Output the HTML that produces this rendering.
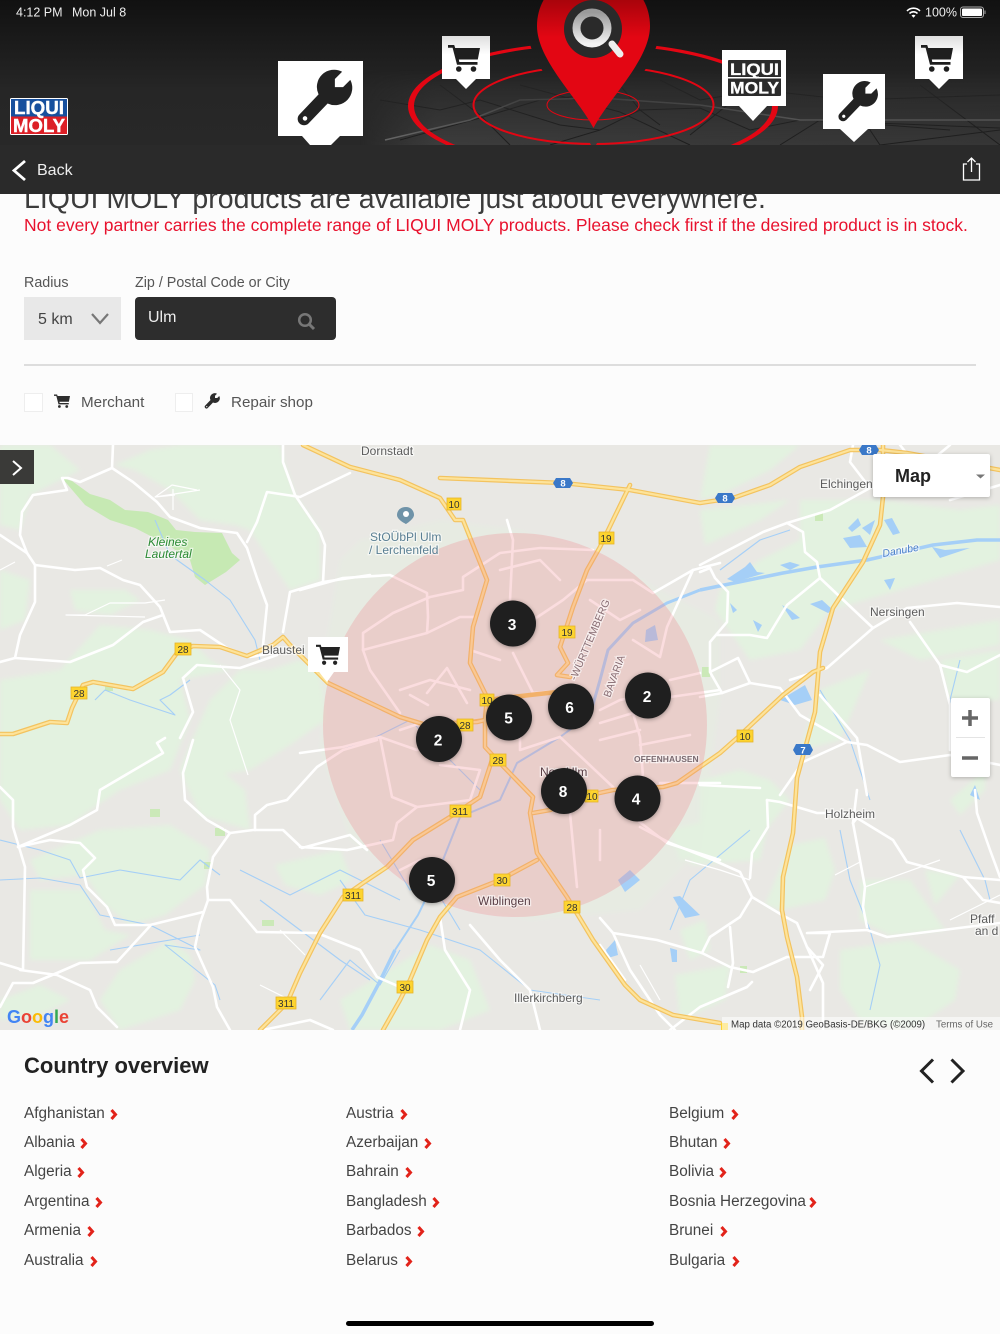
<!DOCTYPE html>
<html lang="en"><head><meta charset="utf-8"><title>LIQUI MOLY dealer search</title>
<style>
*{box-sizing:border-box}
html,body{margin:0;padding:0;width:1000px;height:1334px;overflow:hidden;background:#fcfcfc;font-family:"Liberation Sans",sans-serif}
#p{position:relative;width:1000px;height:1334px;overflow:hidden}
.a{position:absolute;white-space:nowrap}
svg{position:absolute;overflow:hidden}
.c{font-size:15.300px;line-height:20px;color:#444}
.c svg{position:absolute;top:4.500px}
</style></head><body><div id="p">
<svg width="0" height="0" style="left:0;top:0"><defs>
<symbol id="cart" viewBox="0 0 32 28"><path d="M0 1h6.200l1 3H32l-2.200 11.500H10.800l.5 2.500H29.500v2.800H9L4.600 3.800H0z"/><circle cx="10.800" cy="25" r="2.800"/><circle cx="25.500" cy="25" r="2.800"/></symbol>
<symbol id="wrench" viewBox="0 0 64 64"><path fill-rule="evenodd" d="M52 3L44 11V20H53L61 12A19 19 0 0 1 36 38L15 60A7 7 0 0 1 5 50L26 28A19 19 0 0 1 52 3ZM11 52a2.500 2.500 0 1 0 .1 0Z"/></symbol>
<symbol id="rc" viewBox="0 0 8 11"><path d="M1.500 1l4 4.500-4 4.500" fill="none" stroke="#e2231a" stroke-width="3"/></symbol>
<linearGradient id="tag" x1="0" y1="0" x2="0" y2="1"><stop offset="0" stop-color="#dedede"/><stop offset=".35" stop-color="#fff"/></linearGradient>
<linearGradient id="pin" x1="0" y1="0" x2="0" y2="1"><stop offset="0" stop-color="#7d0205"/><stop offset=".42" stop-color="#e30613"/><stop offset="1" stop-color="#e30613"/></linearGradient>
<linearGradient id="mag" x1="0" y1="0" x2="0" y2="1"><stop offset="0" stop-color="#9a9a9a"/><stop offset="1" stop-color="#f2f2f2"/></linearGradient>
<linearGradient id="hd" x1="0" y1="0" x2="0" y2="1"><stop offset="0" stop-color="#111"/><stop offset=".62" stop-color="#262626"/><stop offset="1" stop-color="#282828"/></linearGradient>
<linearGradient id="tex" x1="0" y1="0" x2="1" y2="0"><stop offset="0" stop-color="#3c3c3c" stop-opacity="0"/><stop offset=".12" stop-color="#3c3c3c"/><stop offset="1" stop-color="#363636"/></linearGradient>
<linearGradient id="texv" x1="0" y1="0" x2="0" y2="1"><stop offset="0" stop-color="#fff" stop-opacity="0"/><stop offset="1" stop-color="#fff"/></linearGradient>
<mask id="tm"><rect x="340" y="70" width="660" height="75" fill="url(#texv)"/></mask>
<mask id="rm" maskUnits="userSpaceOnUse" x="0" y="0" width="1000" height="194"><rect width="1000" height="194" fill="#fff"/><path d="M593.500 128C578 98 537 60 537 26C537-5 562-28 593.500-28C625-28 650-5 650 26C650 60 609 98 593.500 128Z" fill="#000" stroke="#000" stroke-width="20"/></mask>
<filter id="bl" x="-5%" y="-5%" width="110%" height="110%"><feGaussianBlur stdDeviation="2"/></filter>
</defs></svg>

<!-- content -->
<div class="a" style="left:24px;top:179px;font-size:28.500px;line-height:40px;color:#3c3c3c">LIQUI MOLY products are available just about everywhere.</div>
<div class="a" style="left:24px;top:215px;font-size:17.500px;line-height:20px;color:#e8112d">Not every partner carries the complete range of LIQUI MOLY products. Please check first if the desired product is in stock.</div>
<div class="a" style="left:24px;top:274px;font-size:14.300px;line-height:18px;color:#555">Radius</div>
<div class="a" style="left:135px;top:274px;font-size:14.300px;line-height:18px;color:#555">Zip / Postal Code or City</div>
<div class="a" style="left:24px;top:297px;width:97px;height:43px;background:#e8e8e8"></div>
<div class="a" style="left:38px;top:310px;font-size:16px;line-height:20px;color:#444">5 km</div>
<svg style="left:90px;top:312px" width="20" height="14"><path d="M2 2l8 9 8-9" fill="none" stroke="#777" stroke-width="2.200"/></svg>
<div class="a" style="left:135px;top:297px;width:201px;height:43px;background:#2d2d2d;border-radius:4px"></div>
<div class="a" style="left:148px;top:308px;font-size:16px;line-height:20px;color:#eee">Ulm</div>
<svg style="left:296px;top:311px" width="20" height="20"><circle cx="9" cy="9" r="5.800" fill="none" stroke="#777" stroke-width="2.500"/><path d="M13 13l5 5" stroke="#777" stroke-width="3"/></svg>
<div class="a" style="left:24px;top:364px;width:952px;height:1.500px;background:#ddd"></div>
<div class="a" style="left:24px;top:393px;width:18.500px;height:18.500px;background:#fff;border:1.500px solid #eee"></div>
<div class="a" style="left:174.500px;top:393px;width:18.500px;height:18.500px;background:#fff;border:1.500px solid #eee"></div>
<svg style="left:54px;top:394px;fill:#2d2d2d" width="16" height="14"><use href="#cart"/></svg>
<svg style="left:204px;top:393px;fill:#2d2d2d" width="16" height="16"><use href="#wrench"/></svg>
<div class="a" style="left:81px;top:393px;font-size:15.200px;line-height:20px;color:#555">Merchant</div>
<div class="a" style="left:231px;top:393px;font-size:15.200px;line-height:20px;color:#555">Repair shop</div>

<!-- map -->
<svg style="left:0;top:445px" width="1000" height="585" viewBox="0 445 1000 585" font-family="'Liberation Sans',sans-serif">
<rect x="0" y="445" width="1000" height="585" fill="#e9e8e4"/>
<g fill="#e3f2e0" filter="url(#bl)">
<path d="M0 445H50L80 470 60 480 30 495 20 530 0 525Z"/>
<path d="M180 445H280L285 465 295 495 320 530 320 580 290 590 270 560 250 530 235 525 200 520 170 490 135 470 115 465 150 450Z"/>
<path d="M0 570L30 580 25 620 0 630Z"/>
<path d="M70 590H125L140 600 110 615 75 610Z"/>
<path d="M0 680L60 670 100 625 150 630 190 640 210 660 230 670 180 680 190 720 170 770 120 790 90 810 70 825 20 830 0 800Z"/>
<path d="M240 670H270L300 660 320 670 325 720 290 745 250 770 215 775 190 745 210 700Z"/>
<path d="M190 745L245 790 250 830 200 815 180 770Z"/>
<path d="M30 860L100 830 170 825 210 850 205 885 165 915 130 925 105 905 85 875 40 880Z"/>
<path d="M30 890H85L105 930 130 935 90 960 30 960Z"/>
<path d="M120 970L170 940 190 955 195 980 180 1010 120 1030 100 1000Z"/>
<path d="M275 865L340 850 352 880 320 895 285 885Z"/>
<path d="M0 1000L40 985 70 1000 40 1015 0 1020Z"/>
<path d="M710 445H800L770 470 720 495 700 500Z"/>
<path d="M800 500L880 500 960 510 1000 505 1000 560 900 590 830 610 800 650 750 660 715 610 720 590 760 560 800 540Z"/>
<path d="M700 510L790 500 760 520 705 545Z"/>
<path d="M820 690L870 670 840 740 800 750Z"/>
<path d="M700 780L740 770 770 780 790 800 750 850 700 850Z"/>
<path d="M700 825L740 810 770 815 760 860 690 865Z"/>
<path d="M790 845L825 838 835 870 825 900 780 910 765 905Z"/>
<path d="M670 830L730 815 740 850 680 860Z"/>
<path d="M680 930L705 920 710 950 690 960Z"/>
<path d="M675 975L730 965 725 1000 680 1020Z"/>
<path d="M860 880L910 880 945 930 890 935 860 920Z"/>
<path d="M925 870L960 875 935 905Z"/>
<path d="M840 950L910 940 960 970 955 1000 910 1030 860 1020 840 990Z"/>
<path d="M950 800L985 770 985 790 960 815Z"/>
<path d="M880 640L1000 620V645L920 660Z"/>
<path d="M940 660L1000 650V700L950 700Z"/>
<path d="M340 1000L430 945 470 960 490 1010 440 1030H350Z"/>
<path d="M340 560L360 540 440 520 520 530 600 555 660 590 720 620V700L700 850 640 910 530 920 440 900 350 840 320 750 325 650Z" opacity=".35"/>
</g>
<path fill="#c6e9b3" d="M62 478L72 481 90 494 110 500 125 510 148 512 168 520 176 530 195 532 222 533 232 553 240 560 226 572 205 585 195 577 190 560 168 545 135 528 110 520 85 505Z"/>
<g fill="#cbe9b8"><rect x="815" y="513" width="8" height="8"/><rect x="105" y="683" width="8" height="8"/><rect x="150" y="809" width="10" height="8"/><rect x="215" y="828" width="10" height="8"/><rect x="204" y="862" width="7" height="7"/><rect x="262" y="920" width="12" height="6"/><rect x="702" y="667" width="8" height="10"/><rect x="740" y="966" width="7" height="7" /></g>

<!-- water -->
<g fill="none" stroke="#a5cff7" stroke-width="1.100" stroke-linejoin="round">
<path d="M155 520L170 555 205 580 230 600 255 640 260 660"/>
<path d="M190 680L170 695 160 700 175 715 130 700 105 690 95 700"/>
<path d="M0 840L40 850 70 860 80 878 120 870 180 880 200 860 220 875"/>
<path d="M0 880L40 878 80 885 100 915 150 925 200 950 165 945 215 985 220 1000"/>
<path d="M110 950L200 935"/><path d="M240 870L260 880 290 895 340 870 400 900"/>
<path d="M260 900L300 930 340 960 370 980"/>
<path d="M320 1000L350 960 380 985 400 950"/>
<path d="M340 880L365 915 420 930 480 950 530 990 600 1000"/>
<path d="M720 570L760 540 790 530M750 830L690 880 670 930"/>
<path d="M840 830L850 880 870 930 880 965 870 1010"/>
<path d="M960 830L985 880 990 900"/><path d="M325 750L360 745 410 720 450 760 480 790"/>
<path d="M380 840L410 890 430 880 460 930"/>
<path d="M960 660L950 700 965 760M820 690L850 740 870 800"/>
</g>
<g fill="none" stroke="#a5cff7" stroke-linejoin="round">
<path stroke-width="3.500" d="M700 590L783 573 817 567 867 560 933 545 977 540H1000"/>
<path stroke-width="3" d="M700 590L667 603 633 623 608 650 600 680 590 715"/>
<path stroke-width="2" d="M590 715L560 737 517 763 500 800 460 817 435 880 418 915 395 950"/>
<path stroke-width="3.500" d="M395 950L378 985 362 1015 352 1030"/>
</g>
<g fill="#a5cff7">
<path d="M727 579L745 567 750 562 757 572 765 573 735 582Z"/>
<path d="M780 565L790 562 800 565 790 570Z"/>
<path d="M843 538L860 535 867 547 850 548Z"/><path d="M884 520L892 518 900 533 893 535Z"/>
<path d="M862 528L875 520 870 535Z"/><path d="M848 528L858 518 861 525 852 532Z"/>
<path d="M810 604L822 600 833 610 828 613Z"/><path d="M782 605L790 610 800 618 792 620Z"/>
<path d="M730 603L737 610 733 613Z"/><path d="M753 620L762 625 758 632Z"/>
<path d="M780 700L805 685 812 700 795 705Z"/>
<path d="M932 547L945 550 970 548 940 558Z"/><path d="M884 580L895 578 890 590Z"/>
<path d="M673 897L680 896 700 915 685 918Z"/>
<path d="M670 948L677 950 677 962 672 962Z"/>
<path d="M606 950L615 940 618 955 608 958Z"/><path d="M970 795L975 785 980 800Z"/>
<path d="M646 630L655 625 658 640 645 642Z"/><path d="M618 880L630 870 640 880 625 892Z"/>
</g>

<!-- white roads -->
<g fill="none" stroke="#fff" stroke-width="2.600" stroke-linejoin="round" stroke-linecap="round">
<path d="M113 445L112 468 80 482 68 478 62 478 67 490 33 495 22 512 20 535 27 553 35 565 75 570 100 568 123 580 140 585 160 607 170 632 200 630 227 648 250 657 273 653"/>
<path d="M112 468L133 482 157 502 170 517 200 528 237 533 247 548 257 578 267 605 263 645"/>
<path d="M0 535L27 553"/>
<path d="M35 565V602L20 635 15 658 0 662"/>
<path d="M15 658L70 662 113 645 143 622 163 615"/>
<path d="M283 445V462L295 495 320 532 325 545 323 582 290 592 283 632"/>
<path d="M350 473L300 497 267 492 257 522 247 542"/>
<path d="M323 582L350 578 370 575"/>
<path d="M183 678L197 665 240 668 277 655"/>
<path d="M183 678L193 712 180 738"/>
<path d="M193 740L183 773 185 800 207 820 230 833 253 830H283L302 848 350 835 367 850"/>
<path d="M230 833L213 857 207 887 208 900 200 923 195 947 213 987 217 1007 230 1030"/>
<path d="M208 900L230 900 257 932 317 933 360 950 377 977 400 987"/>
<path d="M0 787L13 800V827L25 867 23 970 0 963"/>
<path d="M18 847L70 825 97 810 100 790 163 753 157 743 165 738"/>
<path d="M18 847L50 840 80 843 95 858 83 870 87 887 107 907 115 925H150L203 912"/>
<path d="M150 926L117 962 80 963 57 973 33 983H13L0 1007"/>
<path d="M20 970L57 975 90 990 97 1007 117 1027"/>
<path d="M255 830V815L267 805 287 800 317 767 343 750 377 740"/>
<path d="M263 1030L310 1020 333 1030"/>
<path d="M700 572L710 568 715 578 728 592 727 622 710 642V672L722 693 750 683 738 658 710 672"/>
<path d="M700 565L763 532 787 523 830 510 870 488 850 462 853 445"/>
<path d="M787 523L803 532 805 552 817 562 820 578 787 605 767 638 750 635H717"/>
<path d="M820 578L873 628 907 608 957 603 1000 607"/>
<path d="M873 628L827 668 790 680"/>
<path d="M910 622L940 665 967 672 1000 655"/>
<path d="M940 665L950 705V750"/>
<path d="M750 683L780 688 800 715 847 742 867 745 900 762 950 755 1000 765"/>
<path d="M820 695L857 738 867 795"/>
<path d="M700 785L760 788"/><path d="M722 693L700 697"/>
<path d="M847 742L803 762 780 795"/>
<path d="M900 445L920 470 950 445"/><path d="M950 500L1000 485"/>
<path d="M640 827L670 843 713 860 740 872 752 897 782 915 797 923 807 947 823 983V1030"/>
<path d="M752 897L740 917 710 937 702 953"/>
<path d="M702 953L657 940 613 933 600 918"/>
<path d="M702 953L730 967 753 972 787 957H823L830 933 807 933 867 930 887 937 967 927 1000 923"/>
<path d="M867 927L863 907 865 887 853 823 857 818"/>
<path d="M857 818L893 840 907 862 963 877 983 900 1000 903"/>
<path d="M963 877L1000 880"/>
<path d="M767 800L768 827 752 853 750 878"/>
<path d="M767 800L780 802 817 813H857"/>
<path d="M730 927L733 963 728 987"/>
<path d="M752 982L747 987 700 1007 670 1030"/>
<path d="M975 790L977 813 990 850 1000 877"/>
<path d="M807 947L823 965 810 990"/>
<path d="M613 933L630 970 660 1015 675 1030"/>
<path d="M600 945L625 980"/>
<path d="M857 790L853 823"/>
<path d="M460 1030L470 990 445 950 440 917"/>
<path d="M540 1030L530 990 500 960 470 925"/>
<!-- city -->
<path d="M300 590L343 578 390 575 427 593 428 617 427 633 363 650V633L393 613 430 597 463 590V577L500 553 540 548 593 550"/>
<path d="M363 650L370 670 400 713"/><path d="M427 633L460 617H477"/>
<path d="M507 520L513 540 510 600"/>
<path d="M533 620L563 600 587 580H633L653 593 693 570 720 563"/>
<path d="M427 693L447 668 467 703"/>
<path d="M300 753L343 747 380 737 417 750"/>
<path d="M380 737L392 797 417 807 397 823 393 840 347 850 300 847"/>
<path d="M720 783H660"/>
<path d="M637 820L667 843 720 860"/>
<path d="M670 697L720 690M700 673L670 680"/>
<path d="M600 723L633 713 640 737 643 777"/>
<path d="M560 737L613 787 637 820"/>
<path d="M570 813L577 887"/>
<path d="M633 640L660 657 667 627 693 570"/>
<path d="M513 653L533 693 570 690"/>
<path d="M520 720V750L560 737M600 710L620 700 670 690"/>
<path d="M417 807L470 800M400 870L420 860 440 870"/>
<path d="M500 570L540 560 560 580"/>
<path d="M470 690L430 680 400 690M430 720L400 730"/>
<path d="M428 705L410 695M440 765L480 770 470 800M600 740L640 730M640 745L690 735M600 830L600 860M500 660L470 650M590 600L620 620 640 610"/>
</g>
<g fill="none" stroke="#fff" stroke-width="1.200" stroke-linejoin="round">
<path d="M0 570L15 562M107 566L122 560M175 495L155 497 172 485 197 490M173 489V510M200 490L155 497M165 600L145 603 110 603 85 615 66 615 145 617M305 955L280 930M660 1000L640 965"/>
<path d="M685 860L720 870 750 880M835 875L860 862M865 887L940 860M950 920L1000 895"/>
<path d="M220 665L240 690 230 720 248 775"/>
<path d="M260 985L290 1000"/>
</g>

<!-- yellow roads -->
<g fill="none" stroke-linejoin="round" stroke-linecap="round">
<g stroke="#f3c35f" stroke-width="4.600" id="y">
<path id="r1" d="M0 734H13L50 722 67 723 72 708 83 685 93 682 133 689 163 672 177 653 193 646 220 647 247 656 273 645 283 637 290 645 307 662 328 683 400 717 423 724 477 722 485 720 485 747 497 760 533 797 530 813 537 853 567 897 593 940 625 985 640 1000 673 1015 720 1023"/>
<path id="r2" d="M303 445L350 467 400 480 440 498 455 520 463 520 487 580 473 627 470 663 487 697 485 720"/>
<path id="r3" d="M630 485L613 520 600 547 587 570 573 607 560 647 568 663 557 675 570 677"/>
<path id="r4" d="M440 478L563 483 630 490 700 503 733 498 770 485 800 467 850 450H880L907 453 1000 470"/>
<path id="r5" d="M883 445V497L880 525 863 562 833 608 820 652 815 712 797 778 793 833 783 877 782 910 787 937 797 977 802 1017V1030"/>
<path id="r7" d="M533 813L550 810 590 795 613 790 663 787 677 783 720 753 737 738 783 695 813 672 823 668"/>
<path id="r8" d="M492 760L480 797 450 817 413 840 387 867 363 883 343 897 320 933 300 973 287 1003 260 1030"/>
<path id="r9" d="M537 860L500 880 457 897 440 917 427 940 410 980 400 1000 383 1030"/>
<path d="M487 700L530 695 575 690M450 725L500 718"/>
</g>
<g stroke="#fde39a" stroke-width="2.200">
<use href="#r1"/><use href="#r2"/><use href="#r3"/><use href="#r4"/><use href="#r5"/><use href="#r7"/><use href="#r8"/><use href="#r9"/>
</g>
</g>

<circle cx="515" cy="725" r="192" fill="#f08088" fill-opacity=".27"/>

<!-- labels -->
<g font-size="12" fill="#5c5c5c" stroke="#fff" stroke-width="2.500" stroke-opacity=".6" paint-order="stroke">
<text x="361" y="455">Dornstadt</text>
<text x="820" y="488">Elchingen</text>
<text x="262" y="654">Blaustei</text>
<text x="870" y="616">Nersingen</text>
<text x="825" y="818">Holzheim</text>
<text x="970" y="923">Pfaff</text><text x="975" y="935">an d</text>
<text x="540" y="776" fill="#5a3f46">Neu-Ulm</text>
<text x="478" y="905" fill="#5a3f46">Wiblingen</text>
<text x="514" y="1002">Illerkirchberg</text>
<text x="634" y="762" font-size="8.500" font-weight="bold" fill="#7a6a70">OFFENHAUSEN</text>
<g fill="#5a7f93"><text x="370" y="541">StOÜbPl Ulm</text><text x="369" y="554">/ Lerchenfeld</text></g>
<g fill="#2c8a35" font-style="italic"><text x="148" y="546">Kleines</text><text x="145" y="558">Lautertal</text></g>
<text transform="translate(883 557) rotate(-10)" font-size="10.500" font-style="italic" fill="#4a7fc8">Danube</text>
<text transform="translate(576 681) rotate(-67)" font-size="10.500" fill="#8a6f75">-WÜRTTEMBERG</text>
<text transform="translate(610 698) rotate(-70)" font-size="10.500" fill="#8a6f75">BAVARIA</text>
</g>
<path d="M406 507c-6-0-9 4-9 8 0 5 9 9 9 9s8-5 8-9c0-4-3-8-8-8z" fill="#6f93a8"/><circle cx="406" cy="514" r="3" fill="#fff"/>

<!-- shields -->
<g font-size="10" text-anchor="middle" fill="#333">
<g fill="#fdd42f" stroke="#e8b32a" stroke-width=".8">
<rect x="447" y="498" width="14" height="12"/><rect x="599" y="532" width="15" height="12"/><rect x="559" y="626" width="16" height="12"/><rect x="480" y="694" width="14" height="12"/><rect x="457" y="719" width="16" height="12"/><rect x="490" y="754" width="16" height="12"/><rect x="450" y="805" width="21" height="12"/><rect x="585" y="790" width="13" height="12"/><rect x="737" y="730" width="16" height="12"/><rect x="175" y="643" width="16" height="12"/><rect x="71" y="687" width="16" height="12"/><rect x="343" y="889" width="20" height="12"/><rect x="494" y="874" width="16" height="12"/><rect x="564" y="901" width="16" height="12"/><rect x="276" y="997" width="20" height="12"/><rect x="397" y="981" width="16" height="12"/>
</g>
<text x="454" y="508">10</text><text x="606" y="542">19</text><text x="567" y="636">19</text><text x="487" y="704">10</text><text x="465" y="729">28</text><text x="498" y="764">28</text><text x="460" y="815">311</text><text x="592" y="800">10</text><text x="745" y="740">10</text><text x="183" y="653">28</text><text x="79" y="697">28</text><text x="353" y="899">311</text><text x="502" y="884">30</text><text x="572" y="911">28</text><text x="286" y="1007">311</text><text x="405" y="991">30</text>
<g fill="#3a78c8"><path d="M556 478H570L573 483 570 488H556L553 483Z"/><path d="M718 493H732L735 498 732 503H718L715 498Z"/><path d="M862 445H876L879 450 876 455H862L859 450Z"/><path d="M796 744H810L813 750 810 755H796L793 750Z"/></g>
<g fill="#fff" font-size="9.500" font-weight="bold"><text x="563" y="486.500">8</text><text x="725" y="501.500">8</text><text x="869" y="453.500">8</text><text x="803" y="753.500">7</text></g>
</g>

<!-- clusters -->
<g fill="#1f1f1f" style="filter:drop-shadow(0 1px 2px rgba(0,0,0,.35))">
<circle cx="513" cy="623.500" r="23"/><circle cx="648" cy="695.500" r="23"/><circle cx="571" cy="706.500" r="23"/><circle cx="509" cy="717.500" r="23"/><circle cx="439" cy="739" r="23"/><circle cx="564" cy="791" r="23"/><circle cx="637.500" cy="798.500" r="23"/><circle cx="432" cy="880" r="23"/>
</g>
<g fill="#fff" font-size="15.500" font-weight="bold" text-anchor="middle">
<text x="512" y="630">3</text><text x="647" y="702">2</text><text x="569.500" y="713">6</text><text x="508.500" y="723.500">5</text><text x="438" y="745.500">2</text><text x="563" y="797">8</text><text x="636" y="804.500">4</text><text x="431" y="886">5</text>
</g>

<!-- marker -->
<path d="M308 637H348V672H334L327 682 319 672H308Z" fill="#fff"/>
<svg x="316" y="644" width="24" height="21" style="fill:#222"><use href="#cart"/></svg>

<!-- google -->
<text x="7" y="1023" font-size="18" font-weight="bold"><tspan fill="#4285f4">G</tspan><tspan fill="#ea4335">o</tspan><tspan fill="#fbbc05">o</tspan><tspan fill="#4285f4">g</tspan><tspan fill="#34a853">l</tspan><tspan fill="#ea4335">e</tspan></text>

<!-- attribution -->
<rect x="721" y="1023" width="7" height="7" fill="#fdd42f"/>
<rect x="722" y="1017" width="278" height="13" fill="#fff" fill-opacity=".55"/>
<text x="731" y="1027.500" font-size="9.700" fill="#333">Map data ©2019 GeoBasis-DE/BKG (©2009)</text>
<text x="936" y="1027.500" font-size="9.700" fill="#666">Terms of Use</text>

<!-- controls -->
<g style="filter:drop-shadow(0 1px 2px rgba(0,0,0,.25))">
<rect x="873" y="454" width="117" height="43" rx="2" fill="#fff"/>
<rect x="951" y="698" width="39" height="79" rx="2" fill="#fff"/>
</g>
<text x="895" y="482" font-size="18" font-weight="bold" fill="#222">Map</text>
<path d="M976 474.500h9l-4.500 4z" fill="#777"/>
<rect x="956" y="737" width="29" height="1" fill="#e4e4e4"/>
<path d="M970 710v16M962 718h16" stroke="#666" stroke-width="3.500"/>
<path d="M962 758h16" stroke="#666" stroke-width="3.500"/>
<rect x="0" y="450" width="34" height="34" fill="#3a3a38"/>
<path d="M13 461l8 7-8 7" fill="none" stroke="#fff" stroke-width="2"/>
</svg>

<!-- header -->
<svg style="left:0;top:0" width="1000" height="194" viewBox="0 0 1000 194" font-family="'Liberation Sans',sans-serif">
<rect width="1000" height="145" fill="url(#hd)"/>
<g mask="url(#tm)">
<rect x="360" y="60" width="640" height="85" fill="url(#tex)"/>
<g fill="none" stroke="#1a1a1a" stroke-width="1" stroke-opacity=".85">
<path d="M380 100L440 110 480 100 560 125 600 130 640 110 700 108 750 130 800 120 1000 128"/>
<path d="M440 85L480 115 510 145M520 85L620 112 690 145M600 60L640 110 660 125M690 135L740 95M660 80L700 100 760 90 850 100 1000 95"/>
<path d="M400 140L480 118 540 100 590 95M850 100L880 145M920 85L1000 145M880 145L1000 130M780 145L820 120 950 130M550 145L600 130"/>
</g>
<path d="M385 140L470 120 520 100 600 98 700 105 800 120 1000 120" fill="none" stroke="#6a6a6a" stroke-width="1.500"/>
</g>
<!-- rings -->
<g mask="url(#rm)">
<path fill="#e30613" fill-rule="evenodd" d="M408 106A185 64 0 1 1 778 106A185 64 0 1 1 408 106ZM414 106A179 61 0 1 0 772 106A179 61 0 1 0 414 106Z"/>
<ellipse cx="593.500" cy="105" rx="120" ry="39" fill="none" stroke="#e30613" stroke-width="2"/>
</g>
<ellipse cx="593" cy="105" rx="46" ry="15" fill="none" stroke="#e30613" stroke-width="1"/>
<rect y="145" width="1000" height="49" fill="#2a2a2a"/>
<!-- pin -->
<path d="M593.500 128C578 98 537 60 537 26C537-5 562-28 593.500-28C625-28 650-5 650 26C650 60 609 98 593.500 128Z" fill="url(#pin)"/>
<circle cx="593" cy="29" r="29" fill="#2a2a2a"/>
<path d="M612 44L620 54" stroke="#eee" stroke-width="7" stroke-linecap="round"/>
<circle cx="592" cy="28" r="15.500" fill="none" stroke="url(#mag)" stroke-width="8"/>
<!-- tags -->
<path d="M278 61H363V136H340L331 145H310L302 136H278Z" fill="#fff"/>
<svg x="295" y="69" width="58" height="58" style="fill:#222"><use href="#wrench"/></svg>
<path d="M442 36H490V79H476L466 89 456 79H442Z" fill="url(#tag)"/>
<svg x="448" y="44" width="32" height="28" style="fill:#1e1e1e"><use href="#cart"/></svg>
<path d="M915 36H963V79H949L939 89 929 79H915Z" fill="url(#tag)"/>
<svg x="921" y="44" width="32" height="28" style="fill:#1e1e1e"><use href="#cart"/></svg>
<path d="M722 50H786V106H767L753 121 739 106H722Z" fill="#fff"/>
<rect x="728" y="60" width="53" height="36" rx="1" fill="#2b2b2b"/>
<rect x="728" y="77" width="53" height="1.500" fill="#fff"/>
<text x="754.500" y="75" font-size="17" font-weight="bold" fill="#fff" stroke="#fff" stroke-width=".3" text-anchor="middle" textLength="49" lengthAdjust="spacingAndGlyphs">LIQUI</text>
<text x="754.500" y="93.500" font-size="17" font-weight="bold" fill="#fff" stroke="#fff" stroke-width=".3" text-anchor="middle" textLength="49" lengthAdjust="spacingAndGlyphs">MOLY</text>
<path d="M823 74H885V129H868L854 142 840 129H823Z" fill="#fff"/>
<svg x="836.500" y="80.500" width="42" height="42" style="fill:#222"><use href="#wrench"/></svg>
<!-- logo -->
<rect x="10" y="98" width="58" height="37" rx="1.500" fill="#fff"/>
<rect x="11" y="99" width="56" height="17.500" fill="#17509e"/>
<rect x="11" y="116.500" width="56" height="17.500" fill="#dc1f26"/>
<text x="39" y="114" font-size="18.500" font-weight="bold" fill="#fff" stroke="#fff" stroke-width=".4" text-anchor="middle" textLength="50" lengthAdjust="spacingAndGlyphs">LIQUI</text>
<text x="39" y="132" font-size="18.500" font-weight="bold" fill="#fff" stroke="#fff" stroke-width=".4" text-anchor="middle" textLength="52" lengthAdjust="spacingAndGlyphs">MOLY</text>
<!-- status -->
<text x="16" y="16.500" font-size="12.500" fill="#eee">4:12 PM</text>
<text x="72" y="16.500" font-size="12.500" fill="#eee">Mon Jul 8</text>
<text x="925" y="16.500" font-size="12.500" fill="#eee">100%</text>
<path d="M907 11a9 9 0 0 1 13 0M909.500 13.500a5.500 5.500 0 0 1 8 0" fill="none" stroke="#fff" stroke-width="1.600"/><path d="M911.500 15.500a3 3 0 0 1 4 0l-2 2.200z" fill="#fff"/>
<rect x="960.500" y="7" width="23" height="10.500" rx="2.500" fill="none" stroke="#aaa"/>
<rect x="962" y="8.500" width="20" height="7.500" rx="1.300" fill="#fff"/>
<rect x="984.500" y="10.500" width="1" height="3.500" fill="#aaa"/>
<!-- nav -->
<path d="M25 161L14 170.500 25 180" fill="none" stroke="#fff" stroke-width="2.800"/>
<text x="37" y="175" font-size="16" fill="#eee">Back</text>
<path d="M967 164H963.500V180H979.500V164H976M971.500 172V158.500M967.500 162L971.500 158 975.500 162" fill="none" stroke="#fff" stroke-width="1.300"/>
</svg>

<!-- country -->
<div class="a" style="left:24px;top:1052px;font-size:22px;line-height:28px;font-weight:bold;color:#222">Country overview</div>
<svg style="left:915px;top:1055px" width="55" height="32"><path d="M18 4.500L6.500 16 18 27.500M36.500 4.500L48 16 36.500 27.500" fill="none" stroke="#222" stroke-width="3"/></svg>

<div class="a c" style="left:24px;top:1104px">Afghanistan<svg style="left:86px" width="8" height="11"><use href="#rc"/></svg></div>
<div class="a c" style="left:24px;top:1133px">Albania<svg style="left:56px" width="8" height="11"><use href="#rc"/></svg></div>
<div class="a c" style="left:24px;top:1162px">Algeria<svg style="left:53px" width="8" height="11"><use href="#rc"/></svg></div>
<div class="a c" style="left:24px;top:1192px">Argentina<svg style="left:71px" width="8" height="11"><use href="#rc"/></svg></div>
<div class="a c" style="left:24px;top:1221px">Armenia<svg style="left:63px" width="8" height="11"><use href="#rc"/></svg></div>
<div class="a c" style="left:24px;top:1251px">Australia<svg style="left:66px" width="8" height="11"><use href="#rc"/></svg></div>
<div class="a c" style="left:346px;top:1104px">Austria<svg style="left:54px" width="8" height="11"><use href="#rc"/></svg></div>
<div class="a c" style="left:346px;top:1133px">Azerbaijan<svg style="left:78px" width="8" height="11"><use href="#rc"/></svg></div>
<div class="a c" style="left:346px;top:1162px">Bahrain<svg style="left:59px" width="8" height="11"><use href="#rc"/></svg></div>
<div class="a c" style="left:346px;top:1192px">Bangladesh<svg style="left:86px" width="8" height="11"><use href="#rc"/></svg></div>
<div class="a c" style="left:346px;top:1221px">Barbados<svg style="left:71px" width="8" height="11"><use href="#rc"/></svg></div>
<div class="a c" style="left:346px;top:1251px">Belarus<svg style="left:59px" width="8" height="11"><use href="#rc"/></svg></div>
<div class="a c" style="left:669px;top:1104px">Belgium<svg style="left:62px" width="8" height="11"><use href="#rc"/></svg></div>
<div class="a c" style="left:669px;top:1133px">Bhutan<svg style="left:54px" width="8" height="11"><use href="#rc"/></svg></div>
<div class="a c" style="left:669px;top:1162px">Bolivia<svg style="left:50px" width="8" height="11"><use href="#rc"/></svg></div>
<div class="a c" style="left:669px;top:1192px">Bosnia Herzegovina<svg style="left:140px" width="8" height="11"><use href="#rc"/></svg></div>
<div class="a c" style="left:669px;top:1221px">Brunei<svg style="left:51px" width="8" height="11"><use href="#rc"/></svg></div>
<div class="a c" style="left:669px;top:1251px">Bulgaria<svg style="left:63px" width="8" height="11"><use href="#rc"/></svg></div>

<div class="a" style="left:346px;top:1321px;width:308px;height:5px;background:#000;border-radius:3px"></div>
</div></body></html>
